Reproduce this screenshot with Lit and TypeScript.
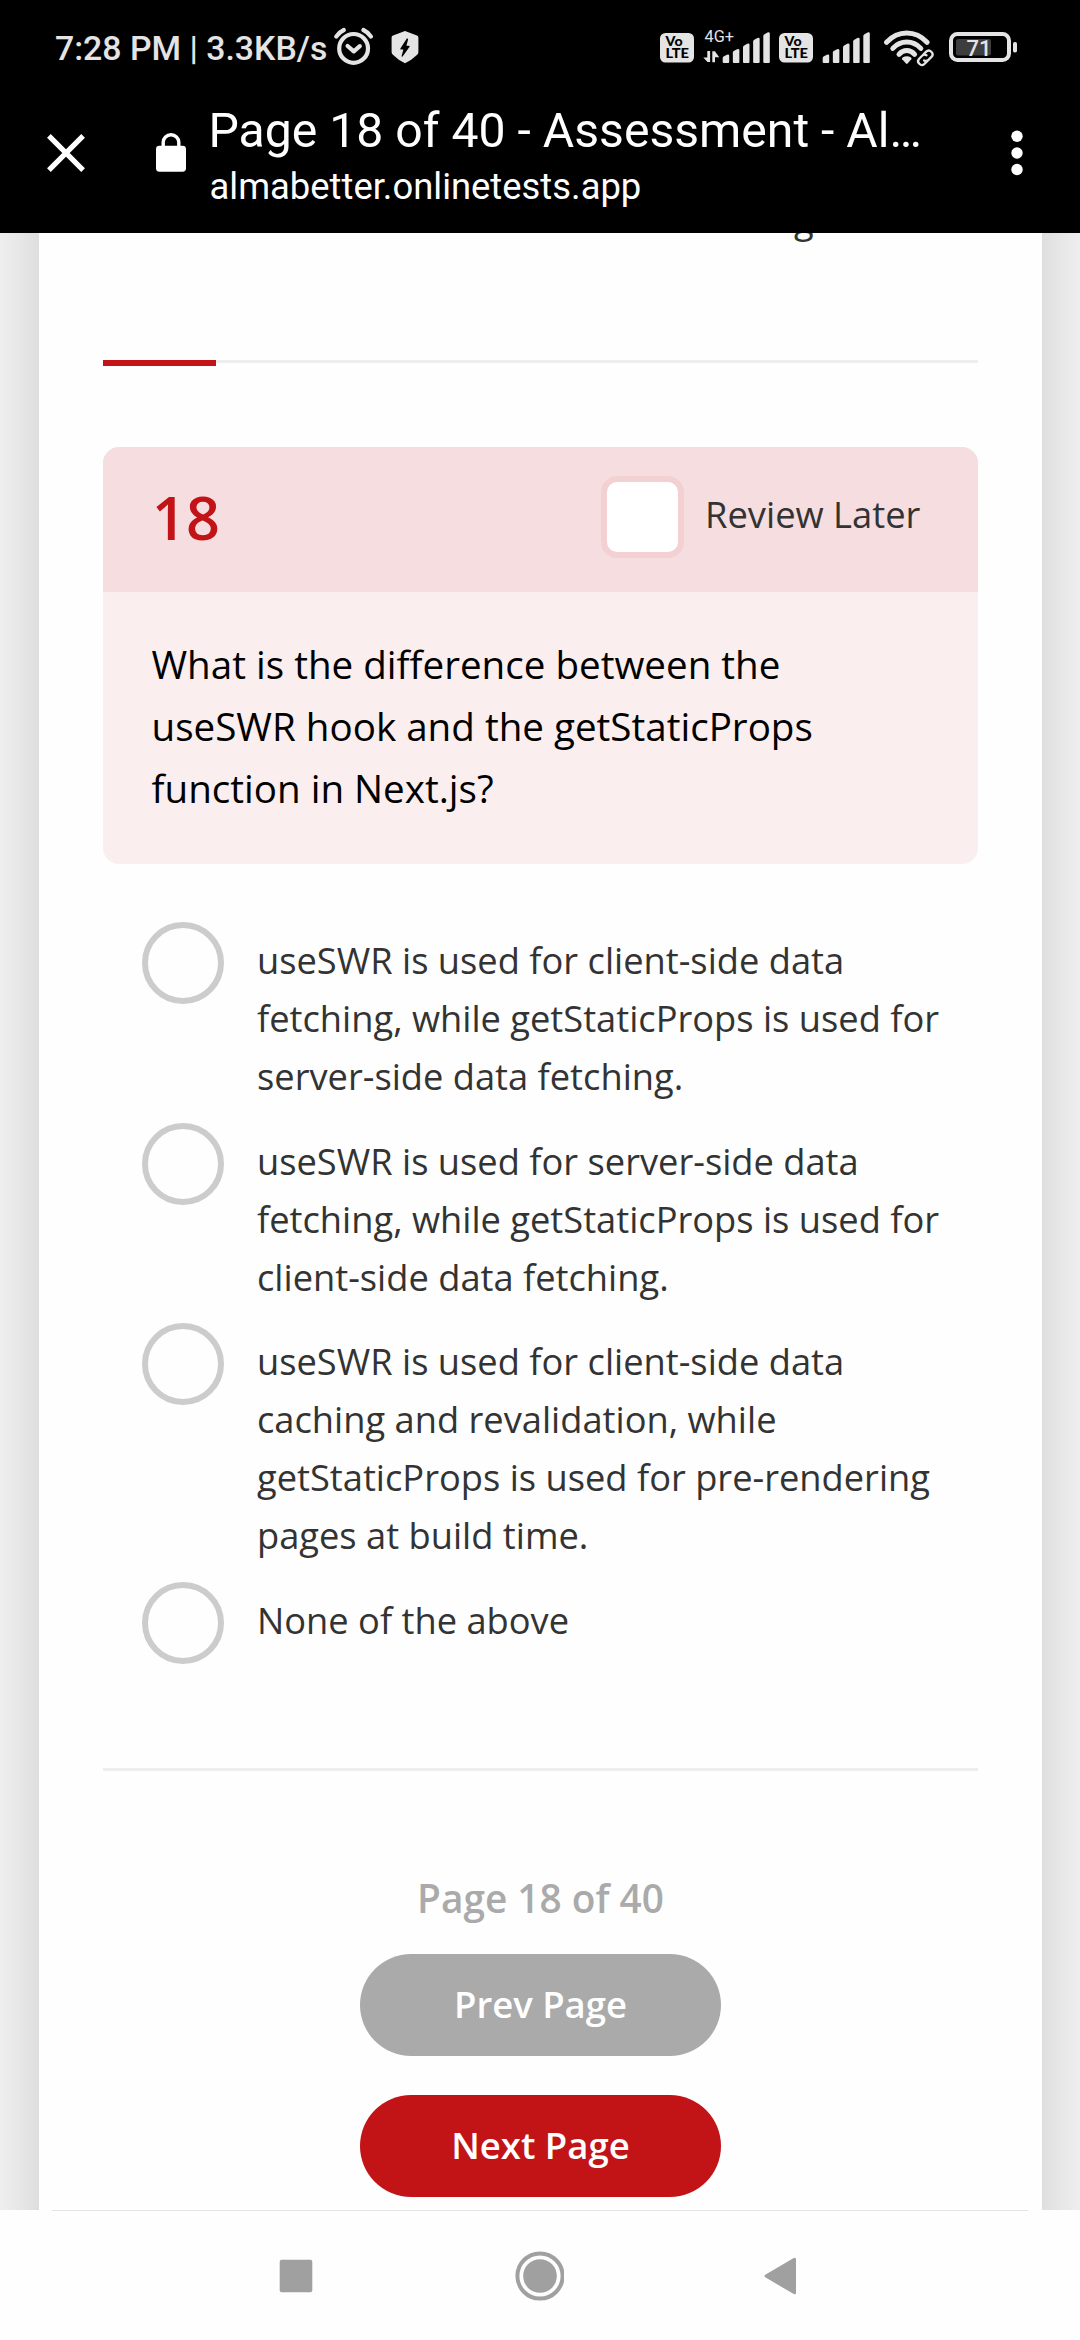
import { LitElement, html, css, svg } from "lit";
import { customElement, property } from "lit/decorators.js";

const volte = () => html`
  <svg class="icon" width="34" height="96" viewBox="0 0 34 96">
    <rect x="0" y="33" width="34" height="29.5" rx="5.5" fill="#e4e4e4" />
    <g font-family="Lato, sans-serif" font-weight="900" font-size="12.6" fill="#000">
      <text x="5.6" y="46" textLength="17" lengthAdjust="spacingAndGlyphs">Vo</text>
      <text x="5.4" y="58.2" textLength="23.6" lengthAdjust="spacingAndGlyphs">LTE</text>
    </g>
  </svg>
`;

const bars = (x: number) =>
  [54.5, 49, 43.6, 37.8, 32.3].map((top, i) => {
    const left = x + i * 10.15;
    return svg`<path fill="#e4e4e4" d="M${left} ${top + 3.6}q0-1 .8-1.5l3.4-1.9q2.3-.8 2.3 1V62q0 1-1 1h-4.5q-1 0-1-1z"/>`;
  });

@customElement("status-bar")
export class StatusBar extends LitElement {
  static styles = css`
    :host {
      display: flex;
      align-items: center;
      height: 96px;
      padding: 0 62px 0 55px;
      color: #e4e4e4;
      font-family: Roboto, sans-serif;
    }
    .clock {
      font-size: 33.8px;
      font-weight: 500;
      line-height: 94px;
      padding-top: 2px;
      white-space: pre;
      width: 278px;
    }
    .icon {
      display: block;
      flex: none;
    }
    .shield {
      margin-left: 17px;
    }
    .right {
      display: flex;
      gap: 9px;
      margin-left: auto;
    }
    .wifi {
      margin-left: 5px;
    }
    .battery {
      margin-left: 6px;
    }
  `;

  render() {
    return html`
      <span class="clock">7:28 PM | 3.3KB/s</span>
      <svg class="icon" width="41" height="96" viewBox="0 0 41 96" fill="none" stroke="#e4e4e4" stroke-width="4.2" stroke-linecap="round" stroke-linejoin="round">
        <circle cx="20.6" cy="48.4" r="14.4" />
        <path d="M14.6 46l6.2 5.4 6-5.2" />
        <path d="M3.2 36.6q3-4.5 7.6-6.6M38 36.6q-3-4.5-7.6-6.6" />
      </svg>
      <svg class="icon shield" width="28" height="96" viewBox="0 0 28 96">
        <path fill="#e4e4e4" d="M14 31l12 4.6q1.4.5 1.4 2V52q0 1.6-1.2 2.7Q20.500 60.200 14 63.200 7.500 60.200 1.900 54.700.6 53.600.6 52V37.600q0-1.500 1.400-2z" />
        <path fill="#000" d="M15.800 38.600L9.400 48.600q-.5 1 .6 1h2.400l-1.800 6.500q0 1.200 1 .4l7-9.700q.4-1-.7-1h-2.500l1.700-6.200q0-1.600-1.300-1z" />
      </svg>
      <div class="right">
        ${volte()}
        <svg class="icon" width="67" height="96" viewBox="703 0 67 96">
          <text x="704.6" y="42" font-family="Roboto, sans-serif" font-size="15.6" fill="#e4e4e4" textLength="29.500" lengthAdjust="spacingAndGlyphs">4G+</text>
          <path fill="#e4e4e4" d="M707.300 51h2.800v11h-2.600l-4.200-4.600h4zM712.300 62.200h2.700v-5h4.200l-4.300-6h-2.600z" />
          ${bars(722.7)}
        </svg>
        ${volte()}
        <svg class="icon" width="48" height="96" viewBox="822 0 48 96">${bars(822.7)}</svg>
        <svg class="icon wifi" width="50" height="96" viewBox="884 0 50 96" fill="none" stroke="#e4e4e4" stroke-linecap="round">
          <path stroke-width="5" d="M886.600 42.300Q895.200 33 906.800 33T927 42.300" />
          <path stroke-width="5" d="M892.800 48.400Q898.800 42.100 906.800 42.100T920.800 48.400" />
          <path stroke-width="5" d="M899 54.400Q902.300 50.600 906.800 50.600T914.600 54.400" />
          <path stroke="none" fill="#e4e4e4" d="M902.200 59.200q-.6-1 .4-1.700 4.200-2.600 8.400 0 1 .7.300 1.700l-3.700 4.400q-.8.8-1.600 0z" />
          <g stroke-width="2.300" transform="rotate(-45 925.3 57.8)">
            <path d="M924.300 61.500h-4q-3.500 0-3.500-3.700t3.500-3.700h4.200q2.800 0 3.500 2.700" />
            <path d="M926.300 54.100h4q3.500 0 3.500 3.700t-3.500 3.700h-4.200q-2.800 0-3.500-2.700" />
          </g>
        </svg>
        <svg class="icon battery" width="69" height="96" viewBox="949 0 69 96">
          <rect x="951" y="34" width="58" height="26" rx="6.500" fill="none" stroke="#e4e4e4" stroke-width="4" />
          <rect x="1013" y="42" width="4" height="10.500" rx="1.800" fill="#e4e4e4" />
          <rect x="956" y="39" width="35" height="16.400" rx="2" fill="#3d3d3d" />
          <text x="966.600" y="55.700" font-family="Roboto, sans-serif" font-weight="500" font-size="22.400" fill="#e4e4e4" textLength="25" lengthAdjust="spacingAndGlyphs">71</text>
        </svg>
      </div>
    `;
  }
}

@customElement("tab-toolbar")
export class TabToolbar extends LitElement {
  static styles = css`
    :host {
      display: flex;
      align-items: flex-start;
      height: 137px;
      padding: 0 57px 0 47px;
      box-sizing: border-box;
      color: #fff;
      font-family: Roboto, sans-serif;
    }
    svg {
      display: block;
      flex: none;
    }
    .close {
      margin-top: 38px;
    }
    .lock {
      margin: 37px 0 0 71px;
    }
    .titles {
      display: flex;
      flex-direction: column;
      gap: 6px;
      margin: 7px 0 0 22.5px;
      white-space: nowrap;
    }
    .title {
      font-size: 48.15px;
      line-height: 56px;
    }
    .url {
      font-size: 36.4px;
      line-height: 44px;
      padding-left: 1px;
    }
    .menu {
      margin: 34px 0 0 auto;
    }
  `;

  render() {
    return html`
      <svg class="close" width="38" height="38" viewBox="0 0 38 38" stroke="#fff" stroke-width="5.200">
        <path d="M1.900 1.900l34.200 34.200M36.100 1.900L1.900 36.100" />
      </svg>
      <svg class="lock" width="30" height="39" viewBox="0 0 30 39">
        <rect y="12.700" width="30" height="26" rx="3.400" fill="#fff" />
        <path d="M7.200 14V9.300a7.800 7.600 0 0 1 15.600 0V14" fill="none" stroke="#fff" stroke-width="3.400" />
      </svg>
      <div class="titles">
        <div class="title">Page 18 of 40 - Assessment - Al…</div>
        <div class="url">almabetter.onlinetests.app</div>
      </div>
      <svg class="menu" width="12" height="46" viewBox="0 0 12 46" fill="#fff">
        <circle cx="6" cy="6.300" r="5.700" />
        <circle cx="6" cy="23" r="5.700" />
        <circle cx="6" cy="39.500" r="5.700" />
      </svg>
    `;
  }
}

@customElement("answer-option")
export class AnswerOption extends LitElement {
  static styles = css`
    :host {
      display: flex;
      align-items: flex-start;
      gap: 33px;
      min-height: 82px;
    }
    .radio {
      flex: none;
      box-sizing: border-box;
      width: 82px;
      height: 82px;
      border: 6px solid #ccc;
      border-radius: 50%;
    }
    .label {
      width: 692px;
      padding-top: 9px;
      color: #333;
      font-size: 36.25px;
      line-height: 58.08px;
    }
  `;

  @property() label = "";

  render() {
    return html`<span class="radio"></span><span class="label">${this.label}</span>`;
  }
}

@customElement("nav-bar")
export class NavBar extends LitElement {
  static styles = css`
    :host {
      display: block;
      height: 130px;
      background: #fefefe;
    }
    .line {
      height: 1px;
      margin: 0 52px;
      background: #e4e4e4;
    }
    .keys {
      display: flex;
      align-items: center;
      height: 129px;
      padding: 0 283px 0 279px;
      justify-content: space-between;
    }
    svg {
      display: block;
    }
  `;

  render() {
    return html`
      <div class="line"></div>
      <div class="keys">
        <svg width="34" height="34" viewBox="0 0 34 34"><rect x=".7" y=".7" width="32.600" height="32.600" rx="2" fill="#a0a0a0" /></svg>
        <svg width="50" height="50" viewBox="0 0 50 50">
          <circle cx="26" cy="25" r="22.600" fill="none" stroke="#a0a0a0" stroke-width="4" />
          <circle cx="26" cy="25" r="16.800" fill="#a0a0a0" />
        </svg>
        <svg width="33" height="38" viewBox="0 0 33 38">
          <path d="M2 19L30.500 2.200V35.800z" fill="#a0a0a0" stroke="#a0a0a0" stroke-width="3" stroke-linejoin="round" />
        </svg>
      </div>
    `;
  }
}

@customElement("app-root")
export class AppRoot extends LitElement {
  static styles = css`
    :host {
      display: block;
      width: 1080px;
      height: 2340px;
      overflow: hidden;
      background: #fefefe;
      font-family: "Open Sans", "Noto Sans", sans-serif;
    }
    .chrome {
      height: 233px;
      background: #000;
    }
    .viewport {
      height: 1977px;
      overflow: hidden;
      background: linear-gradient(to right, #eee 0, #e6e6e6 22px, #dedede 39px, #dfdfdf 1042px, #e6e6e6 1059px, #eee 1080px);
    }
    .sheet {
      box-sizing: border-box;
      height: 1977px;
      margin: 0 38px 0 39px;
      padding: 0 64px;
      overflow: hidden;
      background: #fefefe;
    }
    .intro {
      height: 58px;
      margin-top: -43px;
      padding-left: 691px;
      color: #333;
      font-size: 36.25px;
      line-height: 58px;
    }
    .track {
      height: 3px;
      margin: 112px 0 84px;
      background: #eee;
    }
    .fill {
      height: 6px;
      background: #c21317;
    }
    .card {
      border-radius: 16px;
      overflow: hidden;
      background: #faeeee;
    }
    .head {
      display: flex;
      align-items: flex-start;
      height: 145px;
      padding-left: 49px;
      background: #f6dee0;
    }
    .number {
      width: 449px;
      margin-top: 30px;
      color: #c21317;
      font-size: 59.3px;
      font-weight: 600;
      line-height: 80px;
    }
    .check {
      box-sizing: border-box;
      width: 83px;
      height: 82px;
      margin-top: 29px;
      border: 6px solid #f3d1d2;
      border-radius: 16px;
      background: #fff;
    }
    .review {
      margin: 38px 0 0 21px;
      color: #333;
      font-size: 36.35px;
      line-height: 58px;
    }
    .question {
      height: 230px;
      padding: 42px 100px 0 48.5px;
      color: #000;
      font-size: 38.6px;
      line-height: 61.8px;
    }
    .options {
      display: flex;
      flex-direction: column;
      gap: 17.4px;
      margin-top: 58px;
      padding-left: 39px;
    }
    .rule {
      height: 3px;
      margin-top: 104px;
      background: #ededed;
    }
    .pager {
      display: flex;
      flex-direction: column;
      align-items: center;
      margin-top: 97px;
    }
    .position {
      margin-bottom: 26px;
      color: #aaa;
      font-size: 38.8px;
      font-weight: 600;
      line-height: 60px;
    }
    .button {
      width: 361px;
      height: 102px;
      border-radius: 51px;
      color: #fff;
      font-size: 36.5px;
      font-weight: 600;
      line-height: 101px;
      text-align: center;
    }
    .prev {
      margin-bottom: 39px;
      background: #aaa;
    }
    .next {
      background: #c21317;
    }
  `;

  private options = [
    "useSWR is used for client-side data fetching, while getStaticProps is used for server-side data fetching.",
    "useSWR is used for server-side data fetching, while getStaticProps is used for client-side data fetching.",
    "useSWR is used for client-side data caching and revalidation, while getStaticProps is used for pre-rendering pages at build time.",
    "None of the above",
  ];

  private progress = 12.9;

  render() {
    return html`
      <div class="chrome">
        <status-bar></status-bar>
        <tab-toolbar></tab-toolbar>
      </div>
      <div class="viewport">
        <div class="sheet">
          <div class="intro">g</div>
          <div class="track"><div class="fill" style="width:${this.progress}%"></div></div>
          <div class="card">
            <div class="head">
              <span class="number">18</span>
              <span class="check"></span>
              <span class="review">Review Later</span>
            </div>
            <div class="question">
              What is the difference between the useSWR hook and the getStaticProps function in Next.js?
            </div>
          </div>
          <div class="options">
            ${this.options.map((text) => html`<answer-option .label=${text}></answer-option>`)}
          </div>
          <div class="rule"></div>
          <div class="pager">
            <div class="position">Page 18 of 40</div>
            <div class="button prev">Prev Page</div>
            <div class="button next">Next Page</div>
          </div>
        </div>
      </div>
      <nav-bar></nav-bar>
    `;
  }
}
